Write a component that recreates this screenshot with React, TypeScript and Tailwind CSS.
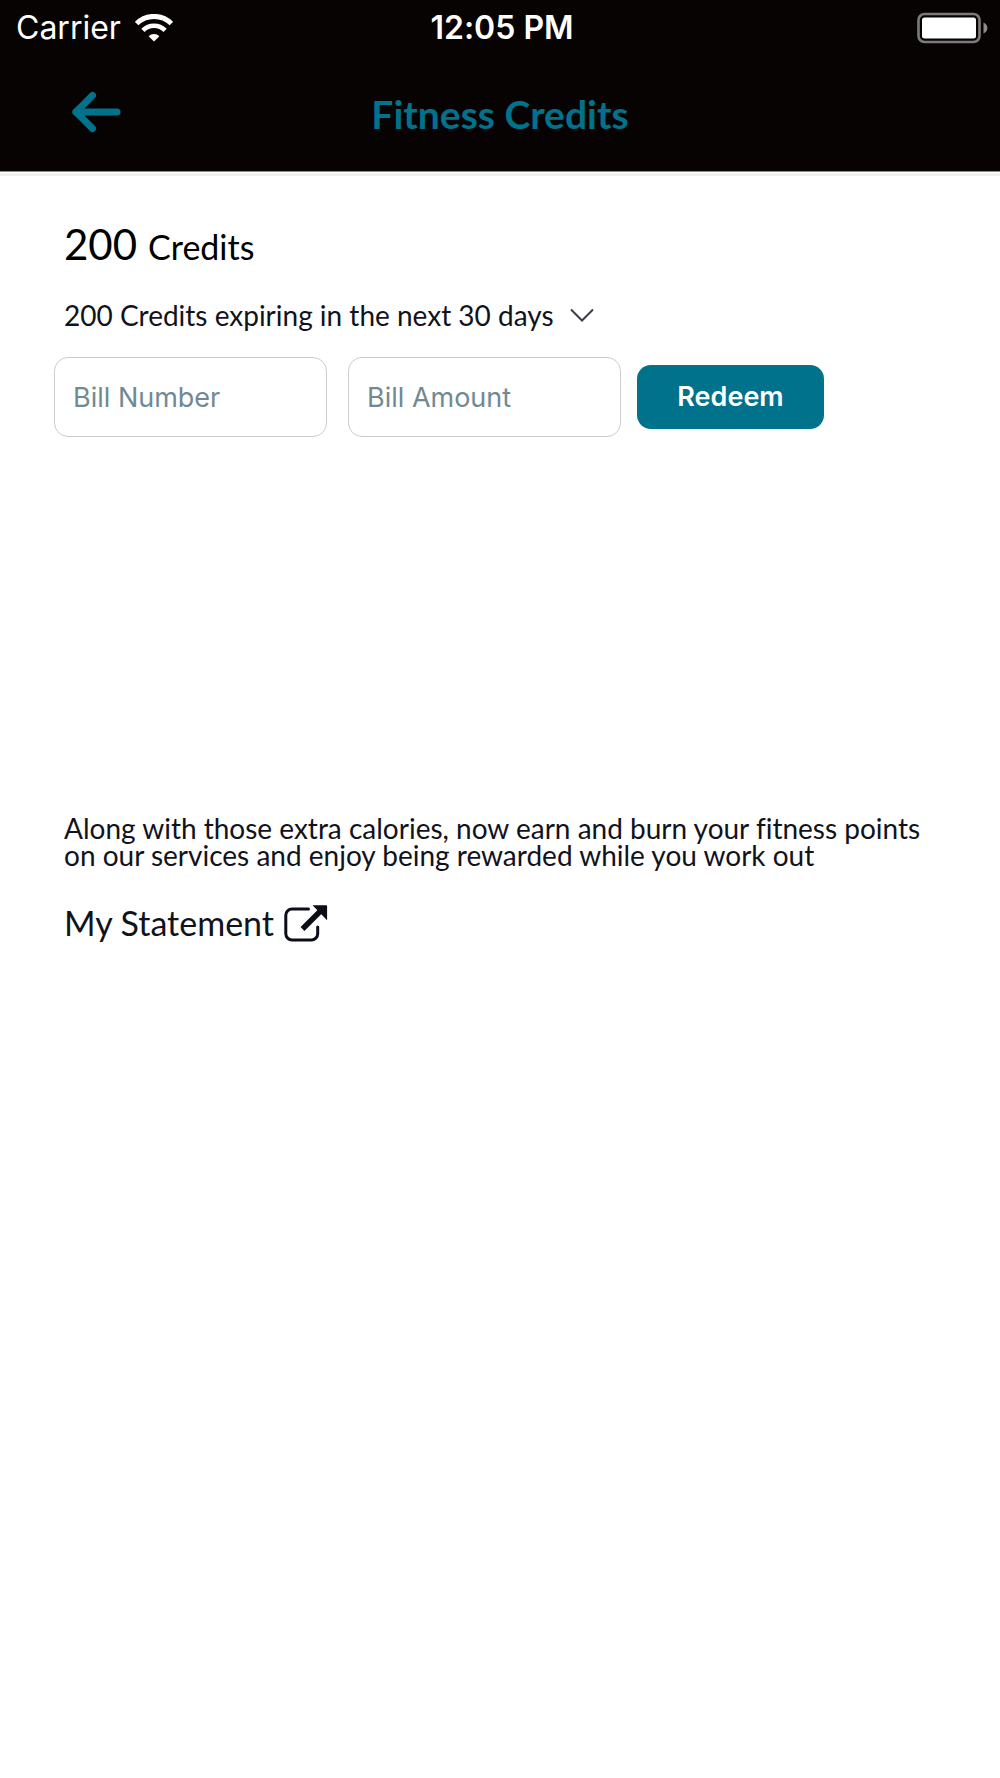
import { useState } from "react";

const brandFont = "font-['Lato',sans-serif]";
const systemFont = "font-['Inter',sans-serif]";

function WifiIcon() {
  return (
    <svg className="w-[38px] h-7" viewBox="0 0 38 28" fill="none" stroke="#fff" aria-hidden="true">
      <path d="M1.6 9.6a24.6 24.6 0 0 1 34.8 0" strokeWidth="5" />
      <path d="M7.9 16.4a15.7 15.7 0 0 1 22.2 0" strokeWidth="4.6" />
      <path d="M19 27.6l-5.4-5.4a7.6 7.6 0 0 1 10.8 0z" fill="#fff" stroke="none" />
    </svg>
  );
}

function BatteryIcon() {
  return (
    <svg className="w-[72px] h-8" viewBox="0 0 72 32" fill="none" aria-hidden="true">
      <rect x="2.5" y="2" width="61" height="28" rx="6" stroke="#7c7b7b" strokeWidth="2.6" />
      <rect x="6" y="5.5" width="54" height="21" rx="2.5" fill="#fff" />
      <path d="M67.5 10.5c2.4 1 3.9 3 3.9 5.5s-1.5 4.5-3.9 5.5z" fill="#8c8b8b" />
    </svg>
  );
}

function BackIcon() {
  return (
    <svg
      className="w-[50px] h-[42px]"
      viewBox="0 0 50 42"
      fill="none"
      stroke="#00728c"
      strokeWidth="7"
      strokeLinecap="round"
      strokeLinejoin="round"
      aria-hidden="true"
    >
      <path d="M5 21H46" />
      <path d="M21.5 4.5L5 21L21.5 37.5" />
    </svg>
  );
}

function ShareIcon() {
  return (
    <svg className="w-11 h-[38px]" viewBox="0 0 44 38" fill="none" stroke="#0b0e18" aria-hidden="true">
      <path
        d="M24.5 5H8a6.2 6.2 0 0 0-6.2 6.2v18.5A6.2 6.2 0 0 0 8 35.900h19.500a6.200 6.200 0 0 0 6.200-6.200V23"
        strokeWidth="3"
        strokeLinecap="round"
      />
      <path d="M18.5 25L37 6.5" strokeWidth="5.4" />
      <path d="M28.5 1.2H42.3a.8.8 0 0 1 .8.8V16.2z" fill="#0b0e18" stroke="none" />
    </svg>
  );
}

interface BillFieldProps {
  label: string;
  value: string;
  onChange: (value: string) => void;
}

function BillField({ label, value, onChange }: BillFieldProps) {
  return (
    <input
      type="text"
      aria-label={label}
      value={value}
      placeholder={label}
      onChange={(e) => onChange(e.target.value)}
      className="
        w-[273px] h-20 px-[18px]
        bg-white border border-[#cccccc] rounded-[14px]
        text-[27px] text-[#11131c] placeholder:text-[#728993]
        focus:outline-none focus:border-[#00728c]
      "
    />
  );
}

export default function App() {
  const [billNumber, setBillNumber] = useState("");
  const [billAmount, setBillAmount] = useState("");
  const [open, setOpen] = useState(false);

  return (
    <div className={`min-h-screen bg-white text-[#11131c] [font-variant-ligatures:none] ${brandFont}`}>
      <header className="bg-[#070303] border-b border-[#8a8888]">
        {/* Status bar */}
        <div className={`grid grid-cols-[1fr_auto_1fr] items-center h-14 pl-4 pr-3 text-[32px] text-white ${systemFont}`}>
          <div className="flex items-center gap-[14px]">
            <span>Carrier</span>
            <WifiIcon />
          </div>
          <span className="font-semibold">12:05 PM</span>
          <div className="flex justify-end">
            <BatteryIcon />
          </div>
        </div>

        {/* Title bar */}
        <div className="grid grid-cols-[1fr_auto_1fr] items-center h-[115px] px-[71px] pt-[2px]">
          <button type="button" aria-label="Back" className="justify-self-start mb-1.5 cursor-pointer">
            <BackIcon />
          </button>
          <h1 className="text-[39px] font-bold text-[#00728c]">Fitness Credits</h1>
        </div>
      </header>
      <div className="h-[3px] mt-px bg-[#f0f0f0]" />

      <main className="pt-11 px-[54px]">
        <p className="flex items-baseline gap-[11px] px-[10px] leading-[48px] text-black">
          <span className="text-[42px]">200</span>
          <span className="text-[34px]">Credits</span>
        </p>

        <button
          type="button"
          aria-expanded={open}
          onClick={() => setOpen(!open)}
          className="flex items-center gap-4 mt-7 px-[10px] text-[28px] leading-8 cursor-pointer"
        >
          200 Credits expiring in the next 30 days
          <svg className="w-6 h-[14px]" viewBox="0 0 24 14" fill="none" stroke="#3b3d45" strokeWidth="2" aria-hidden="true">
            <path d="M1 1.5L12 12.5L23 1.5" />
          </svg>
        </button>

        <form onSubmit={(e) => e.preventDefault()} className={`flex items-center mt-[26px] ${systemFont}`}>
          <div className="flex gap-[21px]">
            <BillField label="Bill Number" value={billNumber} onChange={setBillNumber} />
            <BillField label="Bill Amount" value={billAmount} onChange={setBillAmount} />
          </div>
          <button
            type="submit"
            className="w-[187px] h-16 ml-4 rounded-[14px] bg-[#00728c] text-[27px] font-semibold text-white cursor-pointer"
          >
            Redeem
          </button>
        </form>

        <p className="mt-[378px] px-[10px] text-[28px] leading-[27px]">
          Along with those extra calories, now earn and burn your fitness points
          <br />
          on our services and enjoy being rewarded while you work out
        </p>

        <a href="#statement" className="inline-flex items-center gap-[10px] mt-[34px] px-[10px] text-[34px] leading-10">
          My Statement
          <ShareIcon />
        </a>
      </main>
    </div>
  );
}
